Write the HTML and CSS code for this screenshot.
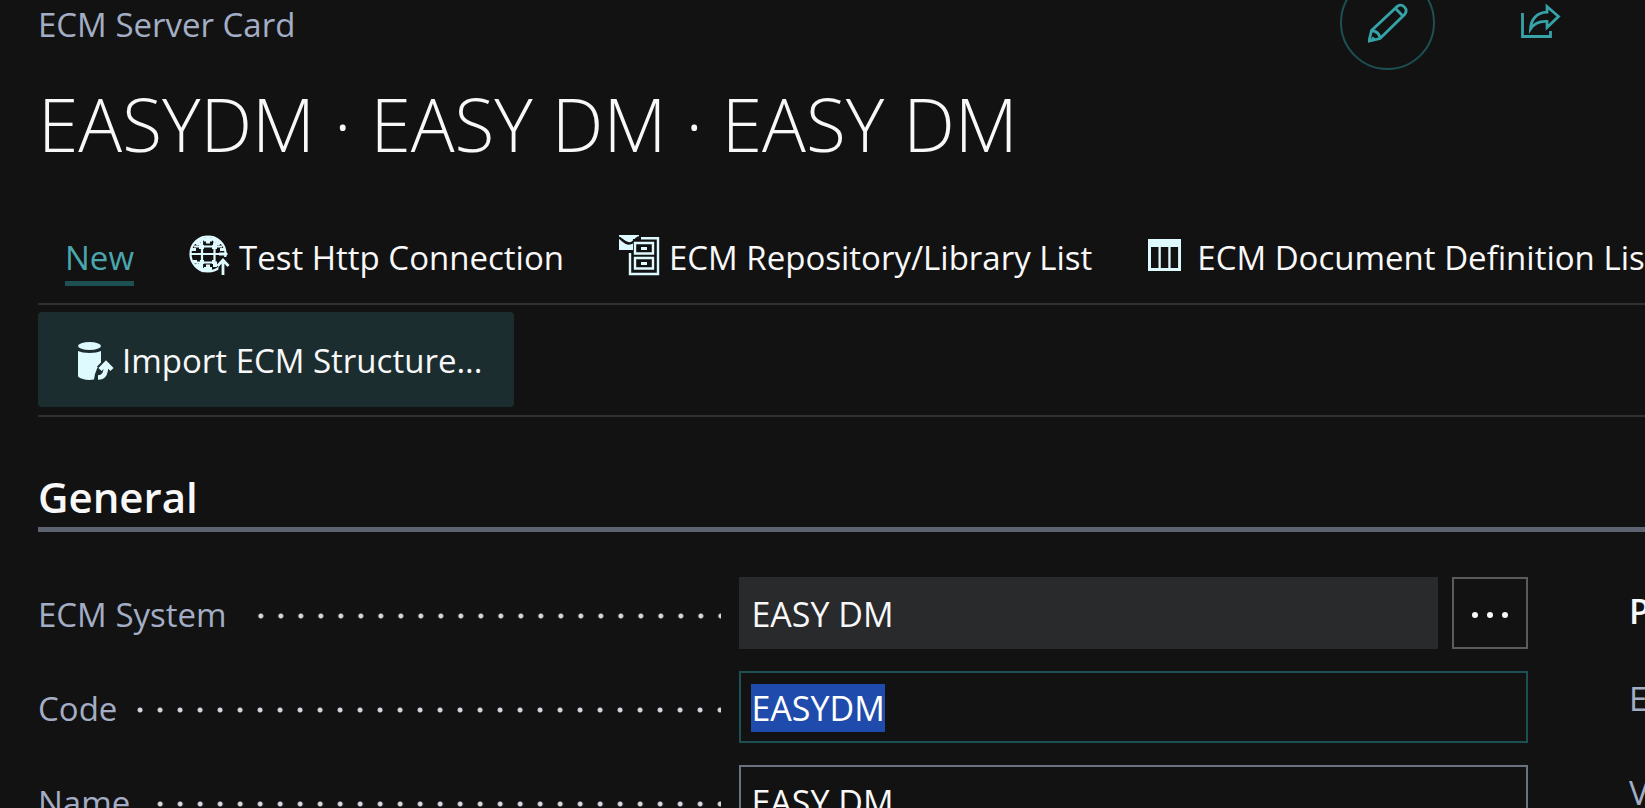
FILE: index.html
```html
<!DOCTYPE html>
<html lang="en">
<head>
<meta charset="utf-8">
<title>ECM Server Card</title>
<link rel="stylesheet" href="styles.css">
</head>
<body>
<main class="page">
  <header class="header">
    <div class="caption">ECM Server Card</div>
    <div class="header-actions">
      <button class="edit" type="button" aria-label="Edit">
        <svg width="40" height="40" viewBox="0 0 40 40" fill="none" stroke="currentColor" stroke-width="2.800"><path d="M1 38.200 3.500 27.500 29.500 3.200a5.500 5.500 0 0 1 7.300 8L12 35.600Z"/><path d="M3.500 27.500c5 .5 8 3.500 8.600 8.100M27.300 5.300l7.600 7.600M4 34.500l2.500 2"/></svg>
      </button>
      <button class="share" type="button" aria-label="Share">
        <svg width="40" height="36" viewBox="0 0 40 36" fill="none" stroke="currentColor" stroke-width="2.800"><path d="M1.500 10v23.500h28V28"/><path d="M26 3.500 37.500 13.500 26 24.500v-6c-7-.5-12.500 1.500-16.500 7.500C10 16 16 9.500 26 9.200Z"/></svg>
      </button>
    </div>
  </header>
  <h1 class="title">EASYDM · EASY DM · EASY DM</h1>

  <nav class="toolbar">
    <button class="tool tool-active" type="button">New</button>
    <button class="tool" type="button">
      <svg class="icon" viewBox="0 0 40 40" fill="none" stroke="#dffaff" stroke-width="2.200"><circle cx="19" cy="19" r="17.500"/><path d="M1.500 19h37M5 11.500h28M5 27.500h23"/><path d="M13 5v28M25.500 5v22"/><path d="M19 1.500v7M19 29.500v7M15 4.500h8M15 34h8" stroke-width="4"/><path d="M7 9.500c3-4 5-5.500 8-6.500M31 9.500c-3-4-5-5.500-8-6.500M7 29c3 4 5 5.500 8 6.500M10 12h5M23 12h5M11 27h4M23 27h3M5 13v3M33 13v3M6 25v2M12 8v4M26 8v4M12 27v5M26 27v5" stroke-width="4"/><path d="M34 22v19" stroke="#121212" stroke-width="9"/><path d="M30 19h8M34 40V26M28.500 31l5.500-6 5.500 6" stroke-width="2.800"/></svg>
      <span>Test Http Connection</span>
    </button>
    <button class="tool" type="button">
      <svg class="icon" viewBox="0 0 40 40" fill="none" stroke="#dffaff" stroke-width="2.400"><path d="M0 0h20v4h-6v11H0Z" fill="#dffaff" stroke="none"/><path d="M0 2.500C4 5 6 8.500 10 8.500S14 6 20 2" stroke="#121212"/><path d="M22 3.200h17V39H11V18"/><path d="M16 8h18v10.500H16ZM16 23h18v10.500H16Z"/><path d="M22 13.500h6M22 28.500h6" stroke-width="2.800"/></svg>
      <span>ECM Repository/Library List</span>
    </button>
    <button class="tool" type="button">
      <svg class="icon" viewBox="0 0 40 40"><path fill="#dffaff" fill-rule="evenodd" d="M1 4h33v32H1ZM4 12v21h7.500V12ZM13.800 12v21h7.500V12ZM23.600 12v21h7.500V12Z"/></svg>
      <span>ECM Document Definition List</span>
    </button>
  </nav>
  <div class="subbar">
    <button class="import" type="button">
      <svg class="icon" viewBox="0 0 40 40"><ellipse cx="15.500" cy="5" rx="11.500" ry="4" fill="#dffaff"/><path fill="#dffaff" d="M4 10c5 2.500 18 2.500 23 0v13c-5 4-4 6-6 10l-1 5.500c-6 1-13 0-16-3Z"/><path d="M24 38c5-1 8-5 8-12M25.500 28l6-6 6 6" fill="none" stroke="#1c2d2f" stroke-width="7"/><path d="M24 36.500c6 0 8-4 8-11M26 28.500l6-6 6 6" fill="none" stroke="#dffaff" stroke-width="4.500"/></svg>
      <span>Import ECM Structure...</span>
    </button>
  </div>

  <section class="general">
    <h2 class="section-title">General</h2>
    <div class="columns">
      <form class="fields">
        <div class="row">
          <div class="label"><label for="system">ECM System</label><span class="dots"></span></div>
          <div class="control">
            <input class="input input-readonly" id="system" type="text" value="EASY DM" readonly>
            <button class="assist" type="button" aria-label="Choose a value">
              <svg width="36" height="6" viewBox="0 0 36 6" fill="currentColor"><circle cx="3" cy="3" r="3"/><circle cx="18" cy="3" r="3"/><circle cx="33" cy="3" r="3"/></svg>
            </button>
          </div>
        </div>
        <div class="row">
          <div class="label"><label for="code">Code</label><span class="dots"></span></div>
          <div class="control"><input class="input input-focus" id="code" type="text" value="EASYDM"></div>
        </div>
        <div class="row">
          <div class="label"><label for="name">Name</label><span class="dots"></span></div>
          <div class="control"><input class="input" id="name" type="text" value="EASY DM"></div>
        </div>
      </form>
      <div class="side">
        <h3 class="side-title">P</h3>
        <div class="side-label">E</div>
        <div class="side-label">V</div>
      </div>
    </div>
  </section>
</main>
<script src="script.js"></script>
</body>
</html>
```
FILE: styles.css
```css
* { box-sizing: border-box; }
html, body { margin: 0; height: 100%; overflow: hidden; }
body {
  background: #121212;
  color: #f8f8f8;
  font-family: "Open Sans", "Noto Sans", sans-serif;
  font-size: 33px;
  line-height: 48px;
}
button, input { font: inherit; color: inherit; border-radius: 0; }
button { background: none; border: 0; padding: 0; cursor: pointer; }
svg { display: block; flex: none; }
h1, h2, h3 { margin: 0; }

.page { padding-left: 38px; }
.header { display: flex; justify-content: space-between; height: 72px; padding-right: 84px; }
.caption { padding-top: 1px; color: #a3aec5; }
.header-actions { display: flex; align-items: flex-start; gap: 86px; color: #35a3a8; }
.edit {
  display: flex; align-items: center; justify-content: center;
  width: 95px; height: 95px; margin-top: -25px;
  border: 2px solid #1d5053; border-radius: 50%;
}
.share { margin-top: 3px; }
.title { font-size: 73px; font-weight: 300; line-height: 104px; white-space: nowrap; }

.toolbar {
  display: flex; align-items: flex-start; gap: 55px;
  height: 78px; margin-top: 51px; padding: 8px 0 0 27px;
  border-bottom: 2px solid #303030;
}
.tool { display: flex; gap: 10px; flex: none; line-height: 46px; white-space: nowrap; }
.tool-active { color: #4ba6ad; border-bottom: 5px solid #1d5053; }
.icon { width: 40px; height: 40px; overflow: visible; }
.subbar { padding: 7px 0 8px; border-bottom: 2px solid #303030; }
.import {
  display: flex; align-items: center; gap: 8px;
  height: 95px; padding: 2px 32px 0 36px;
  background: #1c2d2f; border-radius: 4px; white-space: nowrap;
}

.section-title {
  margin-top: 50px; padding-bottom: 1px;
  font-size: 42px; font-weight: 600; line-height: 59px;
  border-bottom: 5px solid #5d6371;
}
.columns {
  display: grid; grid-template-columns: minmax(0, 1fr) 16px; gap: 101px;
  align-items: start; padding-top: 45px;
}
.fields { display: grid; gap: 22px; }
.row { display: grid; grid-template-columns: 13fr 15fr; gap: 18px; height: 72px; }
.label { display: flex; align-items: center; gap: 18px; padding-top: 4px; color: #a3aec5; }
.dots {
  flex: 1; height: 8px;
  background: radial-gradient(circle at 10px 5px, #d5d8df 2px, transparent 3px) right -9px top 0 / 20px 8px repeat-x;
}
.control { display: flex; gap: 14px; }
.input {
  flex: 1; min-width: 0; padding: 2px 10px 0;
  font-size: 34px;
  background: transparent; border: 2px solid #6b727f; outline: 0;
}
.input-readonly { background: #292a2c; border-color: #292a2c; }
.input-focus { border-color: #1d5053; }
.input::selection { background: rgba(31, 77, 174, 0.99); color: #fff; }
.assist {
  display: flex; align-items: center; justify-content: center;
  width: 76px; padding-top: 4px; border: 2px solid #5b5b5b;
}
.side { white-space: nowrap; overflow: hidden; }
.side-title { font-size: 34px; font-weight: 600; line-height: 48px; margin: 10px 0 40px; }
.side-label { color: #a3aec5; margin-bottom: 46px; }
```
FILE: script.js
```js
const code = document.getElementById("code");
code.focus();
code.select();
```
